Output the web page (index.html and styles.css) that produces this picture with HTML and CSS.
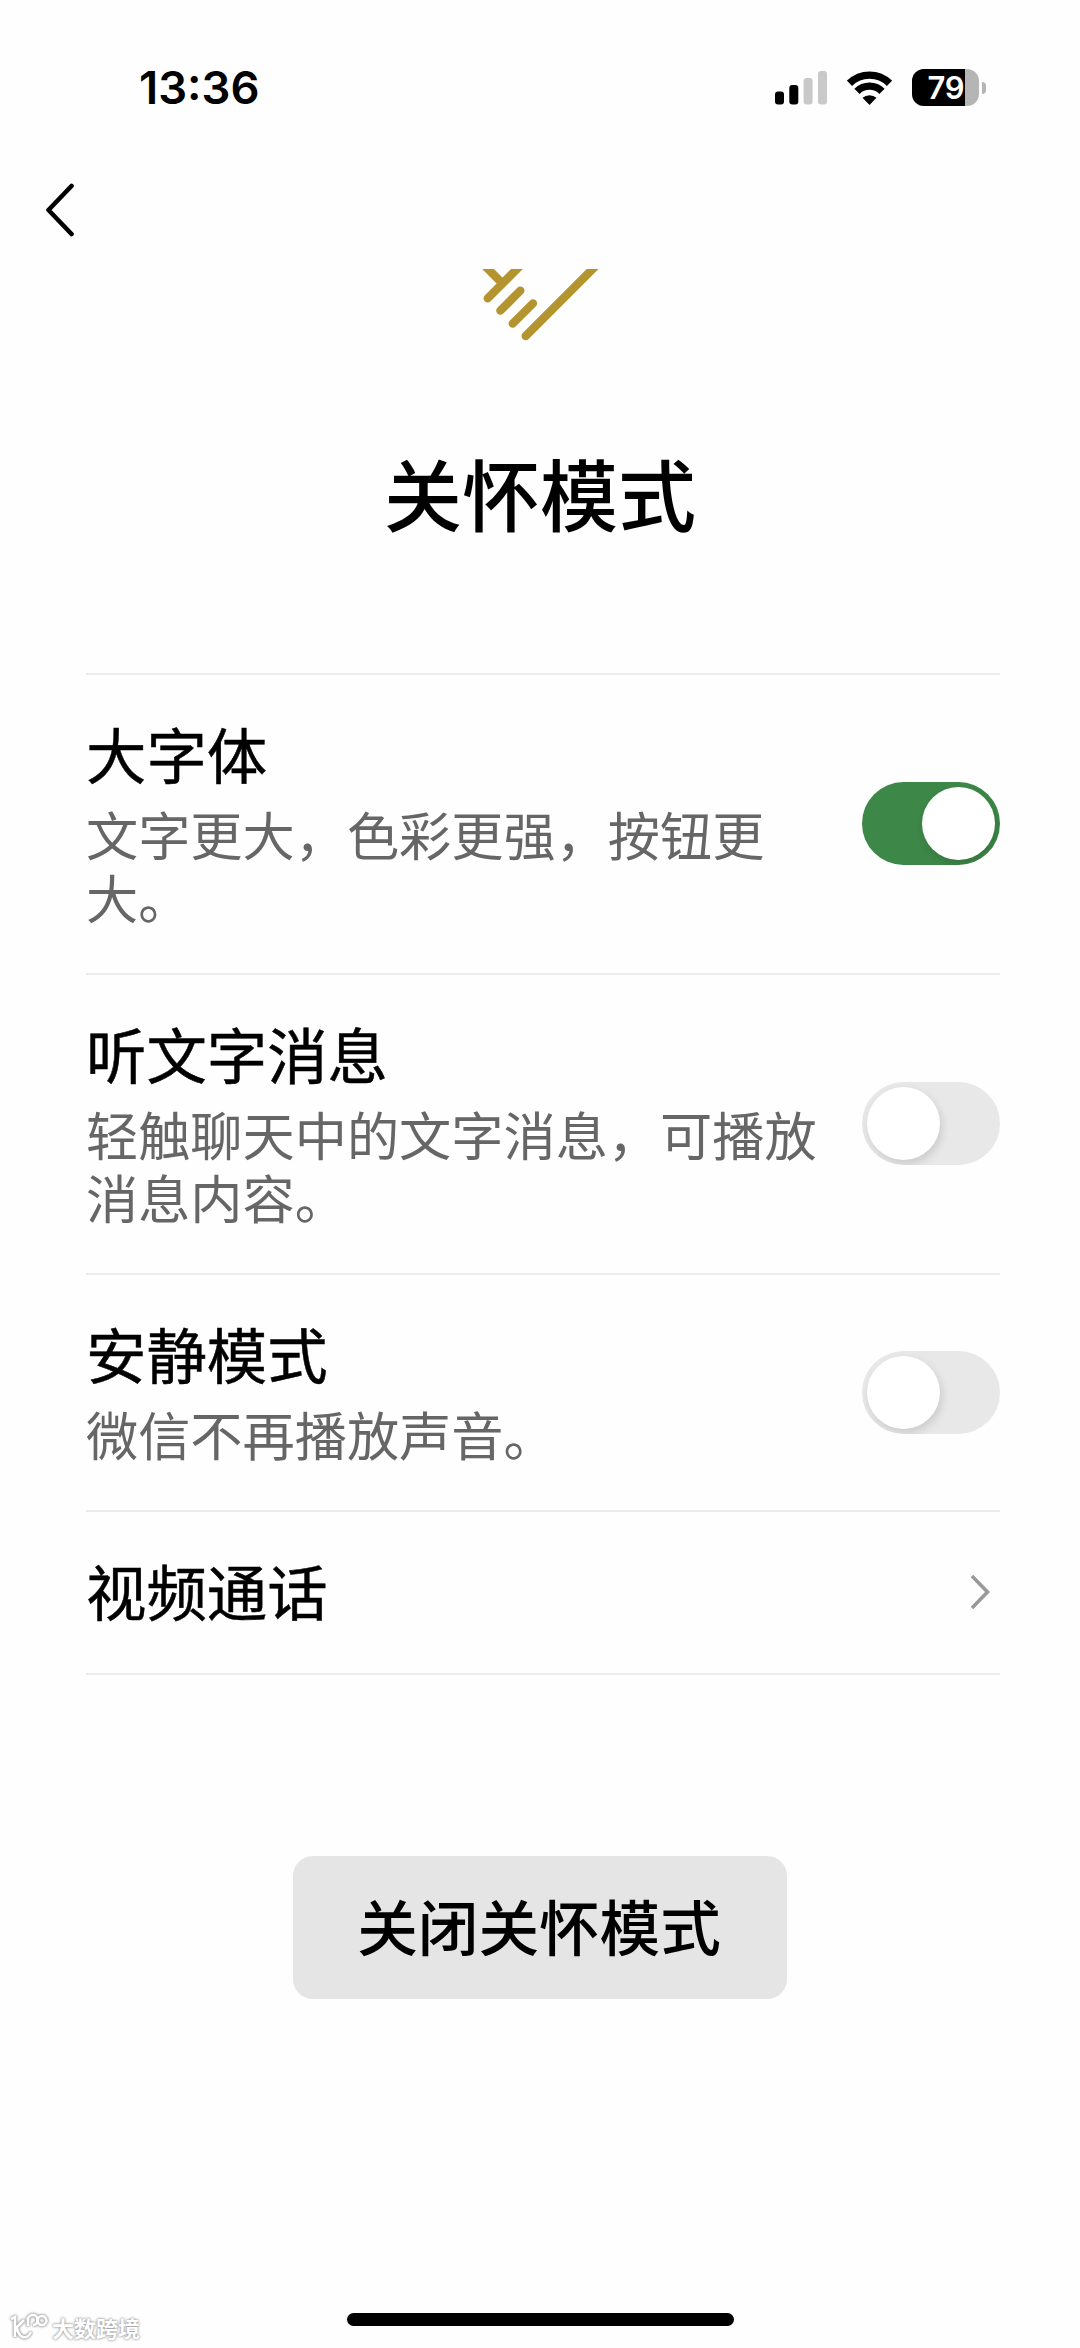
FILE: index.html
```html
<!DOCTYPE html>
<html lang="zh-CN">
<head>
<meta charset="utf-8">
<title>关怀模式</title>
<link rel="stylesheet" href="styles.css">
</head>
<body>
<div class="screen">
  <header class="status">
    <span class="time">13:36</span>
    <div class="indicators">
      <svg class="signal" viewBox="0 0 52 34" width="52" height="34">
        <rect x="0" y="20.5" width="9" height="13" rx="3"/>
        <rect x="14.3" y="14" width="9" height="19.5" rx="3"/>
        <rect class="dim" x="28.6" y="7" width="9" height="26.5" rx="3"/>
        <rect class="dim" x="43" y="0" width="9" height="33.5" rx="3"/>
      </svg>
      <svg class="wifi" viewBox="0 0 45 34" width="45" height="34">
        <path class="arc" d="M2.500 12.300A28.500 28.500 0 0 1 42.500 12.300"/>
        <path class="arc" d="M10 20.300A17.700 17.700 0 0 1 35 20.300"/>
        <path d="M22.500 34L15.500 26.800A10.500 10.500 0 0 1 29.500 26.800Z"/>
      </svg>
      <div class="battery"><span class="level">79</span></div>
      <span class="nub"></span>
    </div>
  </header>

  <nav class="nav">
    <svg viewBox="0 0 30 56" width="30" height="56"><path d="M27.500 4L4.500 28L27.500 52"/></svg>
  </nav>

  <main class="content">
    <svg class="emblem" viewBox="0 58 480 242" width="160" height="80.667">
      <path d="M197 259L430 26M158 222L219 161M121 183L181 123M83 146L203 26M52 26L123 97"/>
    </svg>
    <h1 class="title">关怀模式</h1>

    <section class="list">
      <div class="row">
        <div class="text"><h2>大字体</h2><p>文字更大，色彩更强，按钮更大。</p></div>
        <span class="toggle on"></span>
      </div>
      <div class="row">
        <div class="text"><h2>听文字消息</h2><p>轻触聊天中的文字消息，可播放消息内容。</p></div>
        <span class="toggle"></span>
      </div>
      <div class="row">
        <div class="text"><h2>安静模式</h2><p>微信不再播放声音。</p></div>
        <span class="toggle"></span>
      </div>
      <div class="row link">
        <div class="text"><h2>视频通话</h2></div>
        <svg class="chevron" viewBox="0 0 22 38" width="22" height="38"><path d="M3 3L18.500 19L3 35"/></svg>
      </div>
    </section>

    <button class="close">关闭关怀模式</button>
  </main>

  <footer class="footer">
    <div class="mark">
      <svg viewBox="0 0 40 28" width="40" height="28">
        <path d="M2 6L6 4V24M6 16L15 7M8 15C10 26 18 27 22 19M19 13V4M19 8A5 5 0 1 1 24 12M33 3A4.500 4.500 0 1 1 32.900 3M28 5C29 9 28 12 24 12"/>
      </svg>
      <span>大数跨境</span>
    </div>
    <span class="home"></span>
  </footer>
</div>
</body>
</html>
```
FILE: styles.css
```css
* { box-sizing: border-box; }

body {
  margin: 0;
  background: #fefefe;
  color: #000;
  font-family: "Noto Sans CJK SC", sans-serif;
}

h1, h2, p { margin: 0; }
svg { display: block; fill: none; }

.screen {
  display: flex;
  flex-direction: column;
  width: 1080px;
  height: 2348px;
}

.status {
  display: flex;
  justify-content: space-between;
  align-items: center;
  height: 175px;
  padding: 0 94px 0 139px;
}

.time {
  font: 600 45.4px/60px Inter, sans-serif;
}

.indicators {
  display: flex;
  align-items: center;
}

.signal { fill: #000; }
.signal .dim { fill: #c9c9c9; }
.wifi { margin-left: 20px; fill: #000; }
.wifi .arc { fill: none; stroke: #000; stroke-width: 7.4; }

.battery {
  width: 67px;
  height: 37px;
  margin-left: 20px;
  border-radius: 12px;
  background: #b5b5b5;
  overflow: hidden;
}

.level {
  display: block;
  width: 53px;
  padding-right: 1px;
  background: #000;
  color: #fff;
  font: 600 31px/37px Inter, sans-serif;
  letter-spacing: -0.5px;
  text-align: right;
}

.nub {
  width: 4px;
  height: 12px;
  margin-left: 3px;
  border-radius: 0 5px 5px 0;
  background: #b5b5b5;
}

.nav {
  height: 94px;
  padding: 7px 0 0 44px;
}

.nav path {
  stroke: #000;
  stroke-width: 4.6;
  stroke-linecap: round;
  stroke-linejoin: round;
}

.content {
  display: flex;
  flex-direction: column;
  align-items: center;
}

.emblem { overflow: hidden; }

.emblem path {
  stroke: #b4942f;
  stroke-width: 25;
  stroke-linecap: round;
}

.title {
  margin-top: 82px;
  font-size: 78px;
  font-weight: 500;
  line-height: 120px;
}

.list {
  align-self: flex-start;
  width: 914px;
  margin: 121px 0 0 86px;
  border-top: 2px solid #ebebeb;
}

.row {
  display: flex;
  justify-content: space-between;
  align-items: center;
  height: 300px;
  border-bottom: 2px solid #ebebeb;
}

.row:nth-child(3) { height: 237px; }
.row.link { height: 163px; padding-right: 9px; }

.text {
  width: 742px;
  padding-bottom: 8px;
}

.link .text { padding-bottom: 5px; }

.text h2 {
  font-size: 60.4px;
  font-weight: 400;
  line-height: 84px;
  -webkit-text-stroke: 0.5px #000;
}

.text p {
  margin-top: 7px;
  color: #666;
  font-size: 52.2px;
  line-height: 63px;
}

.toggle {
  display: flex;
  width: 138px;
  height: 83px;
  padding: 5px;
  border-radius: 42px;
  background: #e8e8e8;
  overflow: hidden;
}

.toggle::before {
  content: "";
  width: 73px;
  height: 73px;
  border-radius: 50%;
  background: #fff;
  box-shadow: 2px 4px 8px rgba(0, 0, 0, 0.13);
}

.toggle.on {
  justify-content: flex-end;
  background: #3d8748;
}

.chevron path {
  stroke: #999;
  stroke-width: 3.6;
}

.close {
  width: 494px;
  height: 143px;
  margin-top: 181px;
  padding: 0 2px 4px 0;
  border: 0;
  border-radius: 20px;
  background: #e5e5e5;
  color: #000;
  font: 500 60.6px/90px "Noto Sans CJK SC", sans-serif;
}

.footer {
  display: grid;
  grid-template-columns: 347px 387px;
  align-items: end;
  height: 48px;
  margin-top: auto;
  padding-bottom: 6px;
}

.home {
  height: 13px;
  margin-bottom: 16px;
  border-radius: 7px;
  background: #000;
}

.mark {
  display: flex;
  align-items: center;
  gap: 3px;
  padding-left: 9px;
  color: #fff;
  font-size: 22px;
  font-weight: 700;
  line-height: 30px;
  text-shadow: 0 0 2px #999, 0 0 3px #999;
}

.mark svg {
  filter: drop-shadow(0 0 1px #888) drop-shadow(0 0 1px #bbb);
}

.mark path {
  stroke: #fff;
  stroke-width: 2.6;
}
```
